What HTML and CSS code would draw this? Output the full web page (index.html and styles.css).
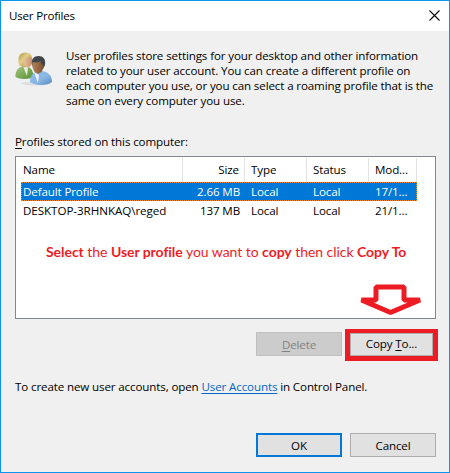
FILE: index.html
```html
<!DOCTYPE html>
<html lang="en">
<head>
<meta charset="utf-8">
<title>User Profiles</title>
<link rel="stylesheet" href="styles.css">
</head>
<body>
<main class="dialog">
  <header class="titlebar">
    <h1 class="title">User Profiles</h1>
    <svg class="close" width="11" height="11" viewBox="0 0 11 11"><path d="M.5.5l10 10M10.5.5l-10 10"/></svg>
  </header>
  <section class="intro">
    <svg class="users" width="38" height="36" viewBox="0 0 38 36">
      <defs>
        <linearGradient id="green" x2="1" y2="1"><stop stop-color="#a5c982"/><stop offset="1" stop-color="#568d31"/></linearGradient>
        <linearGradient id="blue" x2="1" y2="1"><stop stop-color="#8bbcec"/><stop offset=".55" stop-color="#8ab7e4"/><stop offset="1" stop-color="#5689bd"/></linearGradient>
        <linearGradient id="hair" x2="1" y2="1"><stop stop-color="#a9913f"/><stop offset=".4" stop-color="#e0cf86"/><stop offset="1" stop-color="#a58a42"/></linearGradient>
        <linearGradient id="face" x2="1"><stop stop-color="#ebc4a0"/><stop offset="1" stop-color="#c9936c"/></linearGradient>
        <linearGradient id="dark" x2="1"><stop stop-color="#b88356"/><stop offset="1" stop-color="#795033"/></linearGradient>
      </defs>
      <ellipse cx="21" cy="32.500" rx="15" ry="2" fill="#dddfe1"/>
      <path d="M.5 26c-.5-6 3-11 9-11s9 5 9 11c-5 2.500-14 2.500-18 0z" fill="url(#green)"/>
      <path d="M8 15l5 1-1 9z" fill="#f0eee4"/>
      <path d="M4 14C2 6 5 1.500 10.500 1.500S18 5 17 13c-3 4-9 4-13 1z" fill="url(#hair)"/>
      <path d="M8 7.500c3 0 5-1 7-2l2 3c0 5-2 8-4.500 8S8 13 8 7.500z" fill="url(#face)"/>
      <path d="M15 31c0-7 4-11 10.500-11 7 0 11.500 4 11.500 11-5 4-17 4-22 0z" fill="url(#blue)"/>
      <path d="M19 21l5 3-1 8z" fill="#edf2f5"/>
      <path d="M17 13c-1-5 2-8 6.500-8s7.500 3 6.500 9l-2 4-10-1z" fill="#41464c"/>
      <path d="M17.500 11c4 1 6 0 8-1l1 4 2-1c0 6-2 9.500-5.500 9.500s-6-4.500-5.500-11.500z" fill="url(#dark)"/>
    </svg>
    <p class="lines">
      <span>User profiles store settings for your desktop and other information</span>
      <span>related to your user account. You can create a different profile on</span>
      <span>each computer you use, or you can select a roaming profile that is the</span>
      <span>same on every computer you use.</span>
    </p>
  </section>
  <p class="label"><u>P</u>rofiles stored on this computer:</p>
  <section class="list">
    <div class="row head"><span>Name</span><span>Size</span><span>Type</span><span>Status</span><span>Mod...</span></div>
    <div class="row selected"><span>Default Profile</span><span>2.66 MB</span><span>Local</span><span>Local</span><span>17/1...</span></div>
    <div class="row"><span class="account">DESKTOP-3RHNKAQ\reged</span><span>137 MB</span><span>Local</span><span>Local</span><span>21/1...</span></div>
    <p class="note"><b>Select</b> the <b>User profile</b> you want to <b>copy</b> then click <b>Copy To</b></p>
    <svg class="arrow" width="64" height="32" viewBox="0 0 64 32"><path d="M17 3h28v13h16L31.500 28.500 2.500 16H17z"/></svg>
  </section>
  <div class="actions">
    <button class="btn disabled" disabled><u>D</u>elete</button>
    <div class="highlight"><button class="btn copy">Copy <u>T</u>o...</button></div>
  </div>
  <p class="hint">To create new user accounts, open <a>User Accounts</a> in Control Panel.</p>
  <footer class="footer">
    <button class="btn ok">OK</button>
    <button class="btn">Cancel</button>
  </footer>
</main>
</body>
</html>
```
FILE: styles.css
```css
* { box-sizing: border-box; }
body {
  margin: 0;
  font: 11.6px/15px "Open Sans", "Noto Sans", sans-serif;
  letter-spacing: -0.13px;
  color: #000;
}
p, h1 { margin: 0; white-space: nowrap; }
u { text-underline-offset: 2px; text-decoration-thickness: 1px; }
.dialog {
  width: 450px;
  height: 473px;
  border: 1px solid #0a96f0;
  background: #f0f0f0;
  overflow: hidden;
}
.titlebar {
  height: 30px;
  padding: 0 9px 2px 8px;
  display: flex;
  align-items: center;
  justify-content: space-between;
  background: #fff;
}
.title { font-size: 11.6px; font-weight: 400; letter-spacing: -0.22px; }
.close { fill: none; stroke: #000; stroke-width: 1.1; }
.intro { height: 101px; padding: 17px 0 0 14px; display: flex; gap: 13px; }
.users { flex: none; margin-top: 3px; }
.lines span { display: block; }
.label { height: 22px; padding-left: 14px; margin-top: 2px; }
.list {
  position: relative;
  width: 421px;
  height: 163px;
  margin-left: 14px;
  padding: 1px 0 0 5px;
  border: 1px solid #828790;
  background: #fff;
}
.row {
  width: 396px;
  height: 19px;
  display: grid;
  grid-template-columns: 162px 62px 62px 62px 48px;
  line-height: 19px;
  white-space: nowrap;
}
.row span { padding-left: 6px; }
.row span:first-child { padding-left: 2px; }
.row span:nth-child(2) { padding: 0 5px 0 0; text-align: right; }
.row .account { letter-spacing: -0.05px; }
.head { height: 24px; line-height: 24px; }
.head span { border-right: 1px solid #e3e3e3; }
.selected { background: #0078d7; color: #fff; outline: 1px dotted #f08a30; outline-offset: -1px; }
.note { margin: 22px 0 0 25px; font: 14px/20px Lato, sans-serif; letter-spacing: -0.05px; color: #ed1c24; }
.arrow {
  position: absolute;
  left: 343px;
  top: 127px;
  fill: #fff;
  stroke: #ed1c24;
  stroke-width: 5;
  stroke-linejoin: bevel;
}
.actions { height: 33px; margin-top: 10px; display: flex; justify-content: flex-end; gap: 3px; padding-right: 11px; }
.btn {
  width: 86px;
  height: 24px;
  padding: 0;
  border: 1px solid #adadad;
  background: #e1e1e1;
  font: inherit;
  letter-spacing: inherit;
  color: #000;
}
.disabled { margin-top: 3px; background: #ccc; border-color: #bfbfbf; color: #838383; }
.highlight { width: 93px; height: 32px; border: 5px solid #ed1c24; border-top-width: 4px; }
.copy { width: 83px; height: 23px; padding-bottom: 2px; display: block; }
.hint { margin-top: 17px; padding-left: 14px; }
.hint a { color: #0066cc; text-decoration: underline; text-underline-offset: 2px; }
.footer { margin-top: 39px; display: flex; justify-content: flex-end; gap: 8px; padding-right: 13px; }
.ok { border: 2px solid #0078d7; }
```
